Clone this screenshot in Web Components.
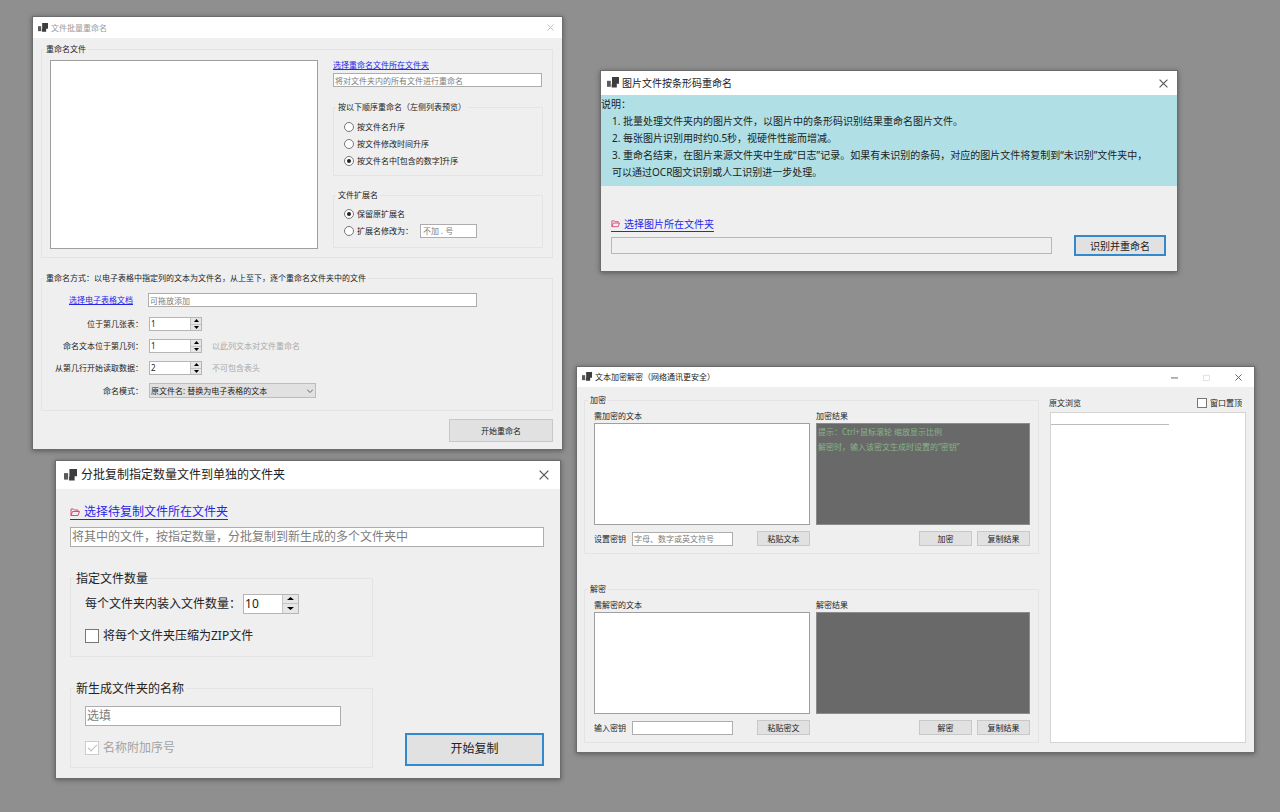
<!DOCTYPE html>
<html lang="zh-CN">
<head>
<meta charset="utf-8">
<title>文件工具</title>
<style>
  html { background: #8f8f8f; }
  body { margin: 0; font-family: "Noto Sans", "Noto Sans CJK SC", sans-serif; color: #222; }
</style>
</head>
<body>
<tool-desktop></tool-desktop>

<script>
const BASE = `
  *, *::before, *::after { box-sizing: border-box; }
  :host { display: block; font-size: var(--fs); line-height: var(--lh); }
  a { color: #2626e8; text-decoration: underline; white-space: nowrap; }
  label, .text { white-space: nowrap; }
  input, select, textarea, button { font: inherit; color: inherit; margin: 0; border-radius: 0; outline: none; }
  input::placeholder { color: #7c7c7c; opacity: 1; }
  input.field { display: block; width: 100%; min-width: 0; height: var(--field); padding: 0 1px; background: #fff; border: 1px solid #adadad; }
  textarea, .list { display: block; width: 100%; padding: 1px; resize: none; background: #fff; border: 1px solid #9f9f9f; overflow: hidden; }
  input[type=radio], input[type=checkbox] { appearance: none; flex: none; display: grid; place-content: center; width: var(--tick); height: var(--tick); background: #fff; border: 1px solid #777; }
  input[type=radio] { border-radius: 50%; }
  input[type=radio]:checked::before { content: ""; width: 4px; height: 4px; border-radius: 50%; background: #222; }
  .option { display: flex; align-items: center; }
  .row { display: flex; align-items: center; }
`;

function define(name, css, html) {
  const tpl = document.createElement('template');
  customElements.define(name, class extends HTMLElement {
    constructor() {
      super();
      this.attachShadow({ mode: 'open' });
    }
    connectedCallback() {
      tpl.innerHTML = `<style>${BASE}${css}</style>${typeof html === 'function' ? html(this) : html}`;
      this.shadowRoot.replaceChildren(tpl.content.cloneNode(true));
    }
  });
}

/* Window frame: title bar, caption buttons, slotted body */
define('app-window', `
  :host { background: #efefef; box-shadow: 0 0 0 1px #6c6c6c, 0 1px 5px 1px rgba(0,0,0,.38); }
  header { display: flex; align-items: center; height: var(--bar); background: #fff; padding-left: var(--bar-pad); }
  .logo { width: var(--logo); height: var(--logo); flex: none; margin-right: var(--logo-gap); }
  h1 { margin: 0; flex: 1; font: inherit; white-space: nowrap; }
  :host([inactive]) h1 { color: #999; }
  .caps { display: flex; }
  .caps button { display: grid; place-items: center; width: 32px; height: 20px; padding: 0; border: 0; background: none; color: #555; }
  :host([inactive]) .caps button { color: #bbb; }
  .caps .off { color: #ddd; }
  .caps svg { width: var(--cap); height: var(--cap); fill: none; stroke: currentColor; }
  .caps .close { width: var(--close-w); }
`, el => `
  <header>
    <svg class="logo" viewBox="0 0 12 12" aria-hidden="true">
      <path fill="#3d3d3d" d="M5 0h7v6.800H9.800V10.500H4.700V7H5z"/>
      <path fill="#5a5a5a" d="M0 3.800h3.800V9.800H0z"/>
    </svg>
    <h1>${el.getAttribute('caption')}</h1>
    <div class="caps">
      ${el.hasAttribute('resizable') ? `
        <button aria-label="最小化"><svg viewBox="0 0 8 8"><path d="M0 4.500h8"/></svg></button>
        <button class="off" disabled aria-label="最大化"><svg viewBox="0 0 8 8"><path d="M.5 1.500h7v6h-7z"/></svg></button>` : ''}
      <button class="close" aria-label="关闭"><svg viewBox="0 0 8 8"><path d="M.5.500l7 7m0-7l-7 7"/></svg></button>
    </div>
  </header>
  <slot></slot>
`);

/* Titled frame */
define('group-box', `
  fieldset { min-width: 0; margin: 0; padding: 0; border: 1px solid #e4e4e4; }
  legend { margin-left: var(--legend-in, 2px); padding: 0 2px; height: var(--legend); line-height: var(--legend); white-space: nowrap; }
`, el => `<fieldset><legend>${el.getAttribute('caption')}</legend><slot></slot></fieldset>`);

/* Label with a numeric box and up/down buttons */
define('number-field', `
  :host { display: flex; align-items: center; gap: var(--num-gap, 6px); }
  label { width: var(--label-w, auto); text-align: right; }
  .box { display: flex; width: var(--num-w); height: var(--field); border: 1px solid #b5b5b5; background: #fff; }
  input { flex: 1; min-width: 0; border: 0; padding: 0 1px; background: none; }
  .spin { display: flex; flex-direction: column; width: var(--spin); background: #e6e6e6; border-left: 1px solid #c4c4c4; }
  .spin button { flex: 1; min-height: 0; display: grid; place-items: center; padding: 0; border: 0; background: none; }
  .spin button + button { border-top: 1px solid #c4c4c4; }
  .spin svg { width: var(--tri); height: 3px; }
`, el => `
  <label for="n">${el.getAttribute('label')}</label>
  <span class="box">
    <input id="n" inputmode="numeric" value="${el.getAttribute('value')}">
    <span class="spin">
      <button aria-label="增加"><svg viewBox="0 0 6 3" preserveAspectRatio="none"><path d="M0 3h6L3 0z"/></svg></button>
      <button aria-label="减少"><svg viewBox="0 0 6 3" preserveAspectRatio="none"><path d="M0 0h6L3 3z"/></svg></button>
    </span>
  </span>
`);

define('push-button', `
  button { display: block; width: 100%; height: 100%; padding: 0; background: #e1e1e1; border: 1px solid #c8c8c8; white-space: nowrap; }
  :host([primary]) button { border: 2px solid #3389cd; }
`, `<button><slot></slot></button>`);

/* Link led by a small open-folder mark */
define('folder-link', `
  a { display: inline-flex; align-items: center; border-bottom: 1px solid currentColor; text-decoration: none; height: var(--lh); }
  svg { width: var(--folder); height: var(--folder); margin-right: 4px; fill: none; stroke: #e0457b; }
`, `<a href="#"><svg viewBox="0 0 10 10" aria-hidden="true"><path d="M1 8.500V2h2.500l1 1H8v1.500M1 8.500l1.500-4H9.500L8 8.500z"/></svg><slot></slot></a>`);

/* Window contents: batch rename */
define('rename-form', `
  :host { padding: 5px 9px 7px 8px; }
  .top { display: grid; grid-template-columns: minmax(0, 268fr) minmax(0, 210fr); gap: 15px; padding: 5px 9px 8px 8px; }
  .list { height: 189px; appearance: none; }
  .side > a { display: block; width: max-content; line-height: 9px; margin-bottom: 4px; }
  .path { padding-right: 1px; margin-bottom: 14px; }
  .options { padding: 5px 10px 6px; }
  .option { height: 17px; gap: 3px; }
  .ext { padding: 4px 10px 8px; }
  .side group-box + group-box { margin-top: 13px; }
  .option .field { width: 57px; margin-left: 4px; padding-left: 2px; }
  .mode { margin-top: 14px; }
  .rows { display: grid; gap: 8px; padding: 9px 0 12px; }
  .sheet { margin: 0 75px 2px 0; }
  .sheet a { width: 91px; text-align: right; margin-right: 15px; flex: none; }
  .row .text { color: #aaa; margin-left: 10px; }
  .lab { width: 101px; text-align: right; margin-right: 6px; }
  .combo { display: grid; width: 167px; height: 15px; align-items: center; background: #e1e1e1; border: 1px solid #bcbcbc; }
  .combo > * { grid-area: 1 / 1; }
  .combo select { appearance: none; width: 100%; height: 13px; line-height: 13px; padding: 0 1px; border: 0; background: none; }
  .combo svg { justify-self: end; width: 6px; height: 4px; margin-right: 2px; fill: none; stroke: #666; pointer-events: none; }
  .foot { display: flex; justify-content: flex-end; margin-top: 8px; }
  .foot push-button { width: 104px; height: 23px; }
`, `
  <group-box caption="重命名文件">
    <div class="top">
      <select class="list" multiple aria-label="文件列表"></select>
      <div class="side">
        <a href="#">选择重命名文件所在文件夹</a>
        <div class="path"><input class="field" aria-label="文件夹" placeholder="将对文件夹内的所有文件进行重命名"></div>
        <group-box caption="按以下顺序重命名（左侧列表预览）">
          <div class="options">
            <label class="option"><input type="radio" name="order">按文件名升序</label>
            <label class="option"><input type="radio" name="order">按文件修改时间升序</label>
            <label class="option"><input type="radio" name="order" checked>按文件名中[包含的数字]升序</label>
          </div>
        </group-box>
        <group-box caption="文件扩展名">
          <div class="ext">
            <label class="option"><input type="radio" name="ext" checked>保留原扩展名</label>
            <div class="option"><label class="option"><input type="radio" name="ext">扩展名修改为：</label><input class="field" aria-label="扩展名" placeholder="不加 . 号"></div>
          </div>
        </group-box>
      </div>
    </div>
  </group-box>
  <group-box class="mode" caption="重命名方式：以电子表格中指定列的文本为文件名，从上至下，逐个重命名文件夹中的文件">
    <div class="rows">
      <div class="row sheet"><a href="#">选择电子表格文档</a><input class="field" aria-label="电子表格文档" placeholder="可拖放添加"></div>
      <div class="row"><number-field label="位于第几张表：" value="1"></number-field></div>
      <div class="row"><number-field label="命名文本位于第几列：" value="1"></number-field><span class="text">以此列文本对文件重命名</span></div>
      <div class="row"><number-field label="从第几行开始读取数据：" value="2"></number-field><span class="text">不可包含表头</span></div>
      <div class="row"><label class="lab" for="mode">命名模式：</label>
        <span class="combo"><select id="mode"><option>原文件名: 替换为电子表格的文本</option></select><svg viewBox="0 0 6 4"><path d="M0 .5l3 3 3-3"/></svg></span>
      </div>
    </div>
  </group-box>
  <div class="foot"><push-button>开始重命名</push-button></div>
`);

/* Window contents: batch copy */
define('copy-form', `
  :host { padding: 15px 16px 10px 14px; }
  .path { margin: 6px 0 24px; }
  .split { display: flex; justify-content: space-between; align-items: flex-end; }
  .groups { flex: 0 1 303px; display: grid; gap: 24px; }
  .count { padding: 7px 14px 13px; }
  .name { padding: 9px 31px 12px 14px; }
  .option { gap: 4px; height: 14px; margin-top: 15px; width: max-content; }
  .option.off { color: #a3a3a3; }
  .off input { border-color: #ccc; }
  .off input:checked::before { content: ""; width: 9px; height: 5px; margin-top: -3px; border: solid #bbb; border-width: 0 0 1px 1px; transform: rotate(-45deg); }
  push-button { width: 139px; height: 33px; margin-bottom: 2px; }
`, `
  <folder-link>选择待复制文件所在文件夹</folder-link>
  <div class="path"><input class="field" aria-label="文件夹" placeholder="将其中的文件，按指定数量，分批复制到新生成的多个文件夹中"></div>
  <div class="split">
    <div class="groups">
      <group-box caption="指定文件数量"><div class="count">
        <number-field label="每个文件夹内装入文件数量：" value="10"></number-field>
        <label class="option"><input type="checkbox">将每个文件夹压缩为ZIP文件</label>
      </div></group-box>
      <group-box caption="新生成文件夹的名称"><div class="name">
        <input class="field" aria-label="名称" placeholder="选填">
        <label class="option off"><input type="checkbox" checked disabled>名称附加序号</label>
      </div></group-box>
    </div>
    <push-button primary>开始复制</push-button>
  </div>
`);

/* Window contents: rename by barcode */
define('barcode-form', `
  .info { background: #b0e0e6; line-height: 17px; padding: 1px 0 5px; white-space: nowrap; overflow: hidden; }
  .info p { margin: 0; }
  .info div { padding-left: 11px; }
  .body { padding: 30px 11px 15px 10px; }
  .row { gap: 22px; margin-top: 3px; }
  .row .field { flex: 1; background: #efefef; border-color: #b8b8b8; }
  push-button { width: 92px; height: 21px; }
`, `
  <div class="info">
    <p>说明：</p>
    <div><p>1. 批量处理文件夹内的图片文件，以图片中的条形码识别结果重命名图片文件。</p>
    <p>2. 每张图片识别用时约0.5秒，视硬件性能而增减。</p>
    <p>3. 重命名结束，在图片来源文件夹中生成“日志”记录。如果有未识别的条码，对应的图片文件将复制到“未识别”文件夹中，</p>
    <p>可以通过OCR图文识别或人工识别进一步处理。</p></div>
  </div>
  <div class="body">
    <folder-link>选择图片所在文件夹</folder-link>
    <div class="row"><input class="field" aria-label="图片文件夹" readonly><push-button primary>识别并重命名</push-button></div>
  </div>
`);

/* One half of the cipher window */
define('cipher-panel', `
  .grid { display: grid; grid-template-columns: 1fr 1fr; column-gap: 6px; padding: 4px 8px 7px 9px; }
  .grid > label { display: block; height: 12px; margin-bottom: 1px; }
  textarea { height: 102px; }
  textarea.out { background: #696969; color: #86b586; line-height: 15px; padding: 0 1px; border-color: #8c8c8c; }
  .row { margin-top: 6px; }
  .row .field { width: 101px; margin: 0 24px 0 6px; }
  push-button { width: 53px; height: 15px; }
  .end { justify-content: flex-end; gap: 5px; }
`, el => {
  const a = n => el.getAttribute(n) || '';
  return `
  <group-box caption="${a('verb')}"><div class="grid">
    <label for="src">需${a('verb')}的文本</label><label for="out">${a('verb')}结果</label>
    <textarea id="src"></textarea><textarea id="out" class="out" readonly>${a('hint')}</textarea>
    <div class="row"><label for="key">${a('key-label')}</label><input class="field" id="key" placeholder="${a('key-hint')}"><push-button>${a('paste')}</push-button></div>
    <div class="row end"><push-button>${a('verb')}</push-button><push-button>复制结果</push-button></div>
  </div></group-box>`;
});

/* Window contents: text encryption */
define('cipher-form', `
  :host { display: flex; gap: 10px; padding: 7px 8px 9px 7px; }
  .left { flex: 455; min-width: 0; display: grid; gap: 29px; }
  .right { flex: 197; min-width: 0; display: flex; flex-direction: column; padding-top: 3px; }
  .head { display: flex; justify-content: space-between; height: 12px; margin-bottom: 3px; padding-right: 4px; }
  .option { gap: 3px; }
  .view { flex: 1; margin-left: 1px; background: #fff; border: 1px solid #d4d4d4; }
  hr { width: 61%; margin: 11px 0 0; border: 0; border-top: 1px solid #bbb; }
`, `
  <div class="left">
    <cipher-panel verb="加密" key-label="设置密钥" key-hint="字母、数字或英文符号" paste="粘贴文本" hint="提示：Ctrl+鼠标滚轮 缩放显示比例&#10;解密时，输入该密文生成时设置的“密钥”"></cipher-panel>
    <cipher-panel verb="解密" key-label="输入密钥" paste="粘贴密文"></cipher-panel>
  </div>
  <div class="right">
    <div class="head"><span class="text">原文浏览</span><label class="option"><input type="checkbox">窗口置顶</label></div>
    <div class="view"><hr></div>
  </div>
`);

define('tool-desktop', `
  :host { display: grid; grid-template-columns: minmax(0, 529fr) minmax(0, 677fr); gap: 15px; align-items: start; min-height: 100vh; padding: 17px 26px 0 33px; }
  .small { --fs: 8px; --lh: 12px; --field: 14px; --tick: 10px; --legend: 12px; --bar: 21px; --bar-pad: 5px; --logo: 10px; --logo-gap: 3px; --cap: 7px; --close-w: 24px; --label-w: 101px; --num-w: 53px; --spin: 11px; --tri: 5px; }
  .medium { --fs: 10px; --lh: 16px; --field: 17px; --legend: 14px; --bar: 24px; --bar-pad: 6px; --logo: 12px; --logo-gap: 3px; --cap: 9px; --close-w: 28px; --folder: 9px; }
  .large { --fs: 12px; --lh: 16px; --field: 20px; --tick: 14px; --legend: 16px; --bar: 28px; --bar-pad: 8px; --logo: 13px; --logo-gap: 4px; --cap: 10px; --close-w: 32px; --num-w: 56px; --spin: 16px; --tri: 7px; --folder: 10px; --legend-in: 3px; --num-gap: 2px; }
  .wide { --bar: 20px; --close-w: 32px; --legend-in: 3px; --bar-pad: 5px; }
  .left .large { margin: 12px 2px 0 23px; }
  .right { padding-top: 54px; }
  .right .medium { margin: 0 77px 96px 24px; }
`, `
  <div class="left">
    <app-window class="small" caption="文件批量重命名" inactive><rename-form></rename-form></app-window>
    <app-window class="large" caption="分批复制指定数量文件到单独的文件夹"><copy-form></copy-form></app-window>
  </div>
  <div class="right">
    <app-window class="medium" caption="图片文件按条形码重命名"><barcode-form></barcode-form></app-window>
    <app-window class="small wide" caption="文本加密解密（网络通讯更安全）" resizable><cipher-form></cipher-form></app-window>
  </div>
`);
</script>
</body>
</html>
